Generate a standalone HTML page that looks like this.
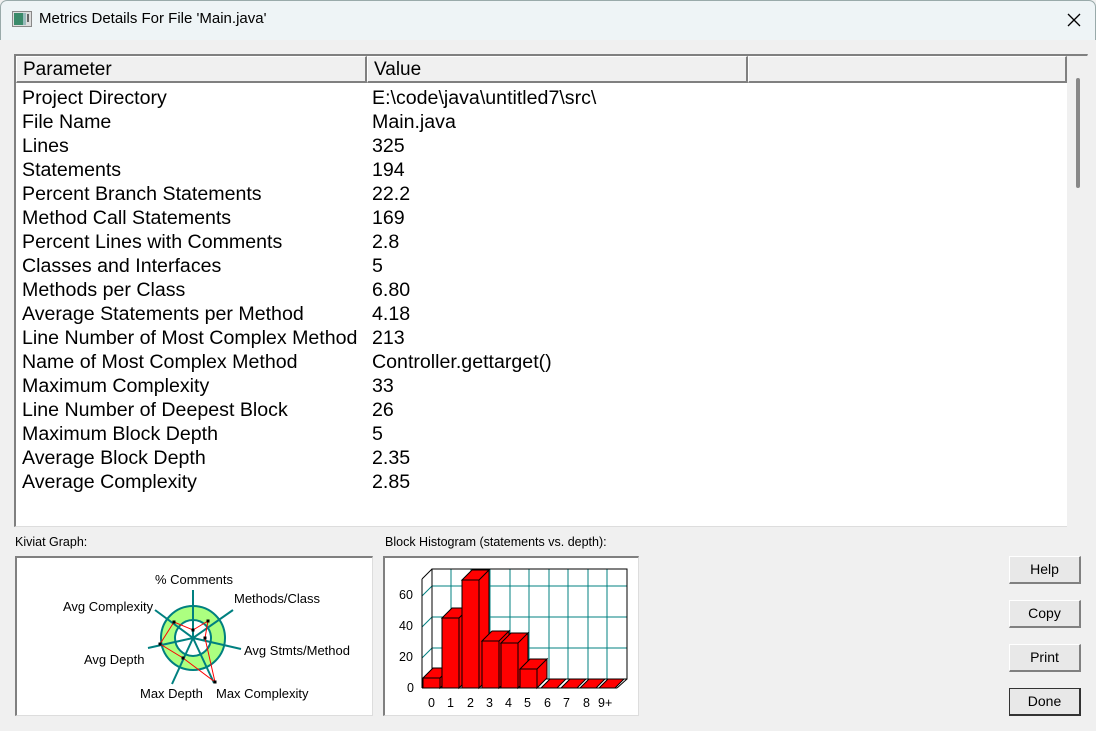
<!DOCTYPE html>
<html><head><style>
*{margin:0;padding:0;box-sizing:border-box}
body{width:1096px;height:731px;background:#f0f0f0;font-family:"Liberation Sans",Arial,sans-serif;position:relative;overflow:hidden}
.a{position:absolute}
.title{left:0;top:0;width:1096px;height:40px;background:#eef4f6;border:1px solid #9aa;border-bottom:none;border-radius:7px 7px 0 0}
.tt{left:39px;top:10px;font-size:15px;color:#000}
.list{left:14px;top:54px;width:1074px;height:473px;background:#fff;border-top:2px solid #808080;border-left:2px solid #808080;border-right:1px solid #ddd;border-bottom:1px solid #ddd}
.hdr{top:0;height:27px;background:#f0f0f0;border-top:1px solid #fff;border-left:1px solid #fff;border-bottom:2px solid #808080;border-right:2px solid #808080;font-size:19px;padding-left:6px;line-height:26px}
.rows{font-size:19.6px;line-height:24px}
.sb{left:1051px;top:0;width:21px;height:471px;background:#f0f0f0}
.btn{width:72px;height:28px;background:#e8e8e8;border-top:1px solid #fff;border-left:1px solid #fff;border-right:2px solid #808080;border-bottom:2px solid #808080;font-size:14px;text-align:center;line-height:25px}
.lbl{font-size:12.5px}
.box{background:#fff;border-top:2px solid #808080;border-left:2px solid #808080;border-right:1px solid #ddd;border-bottom:1px solid #ddd}
</style></head><body>
<div class="a title"></div>
<svg class="a" style="left:12px;top:11px" width="20" height="16"><rect x="0.5" y="0.5" width="19" height="15" fill="#ddd" stroke="#888"/><rect x="2" y="2" width="9" height="12" fill="#3a8a6a"/><rect x="11" y="2" width="3" height="12" fill="#9bb"/><rect x="15" y="3" width="2" height="8" fill="#666"/></svg>
<div class="a tt">Metrics Details For File 'Main.java'</div>
<svg class="a" style="left:1067px;top:13px" width="14" height="14"><path d="M1 1L13 13M13 1L1 13" stroke="#000" stroke-width="1.3"/></svg>

<div class="a list">
 <div class="a hdr" style="left:0;width:351px">Parameter</div>
 <div class="a hdr" style="left:351px;width:381px">Value</div>
 <div class="a hdr" style="left:732px;width:319px"></div>
 <div class="a sb"><div class="a" style="left:9px;top:22px;width:4px;height:110px;background:#888;border-radius:2px"></div></div>
 <div class="a rows" style="left:6px;top:30px">Project Directory<br>File Name<br>Lines<br>Statements<br>Percent Branch Statements<br>Method Call Statements<br>Percent Lines with Comments<br>Classes and Interfaces<br>Methods per Class<br>Average Statements per Method<br>Line Number of Most Complex Method<br>Name of Most Complex Method<br>Maximum Complexity<br>Line Number of Deepest Block<br>Maximum Block Depth<br>Average Block Depth<br>Average Complexity</div>
 <div class="a rows" style="left:356px;top:30px">E:\code\java\untitled7\src\<br>Main.java<br>325<br>194<br>22.2<br>169<br>2.8<br>5<br>6.80<br>4.18<br>213<br>Controller.gettarget()<br>33<br>26<br>5<br>2.35<br>2.85</div>
</div>

<div class="a lbl" style="left:15px;top:535px">Kiviat Graph:</div>
<div class="a lbl" style="left:385px;top:535px">Block Histogram (statements vs. depth):</div>

<div class="a box" style="left:15px;top:556px;width:358px;height:160px"></div>
<svg class="a" style="left:15px;top:556px" width="358" height="160" font-family="Liberation Sans,Arial,sans-serif" font-size="13">
 <g transform="translate(178,82)">
  <circle r="25" fill="none" stroke="#acff80" stroke-width="14"/>
  <circle r="32" fill="none" stroke="#008080" stroke-width="2"/>
  <circle r="18" fill="none" stroke="#008080" stroke-width="2"/>
  <g stroke="#008080" stroke-width="2">
   <line x1="0" y1="0" x2="0" y2="-48"/>
   <line x1="0" y1="0" x2="40" y2="-28"/>
   <line x1="0" y1="0" x2="48" y2="11"/>
   <line x1="0" y1="0" x2="21" y2="45"/>
   <line x1="0" y1="0" x2="-21" y2="46"/>
   <line x1="0" y1="0" x2="-45" y2="10"/>
   <line x1="0" y1="0" x2="-38" y2="-28"/>
  </g>
  <polygon points="0,-8 15,-17 12,0 22,44 -10,20 -33,6 -19,-16" fill="none" stroke="#f00" stroke-width="1"/>
  <g fill="#000"><rect x="-1.5" y="-9.5" width="3" height="3"/><rect x="13.5" y="-18.5" width="3" height="3"/><rect x="10.5" y="-1.5" width="3" height="3"/><rect x="20.5" y="42.5" width="3" height="3"/><rect x="-11.5" y="18.5" width="3" height="3"/><rect x="-34.5" y="4.5" width="3" height="3"/><rect x="-20.5" y="-17.5" width="3" height="3"/></g>
 </g>
 <text x="140" y="28">% Comments</text>
 <text x="219" y="47">Methods/Class</text>
 <text x="48" y="55">Avg Complexity</text>
 <text x="229" y="99">Avg Stmts/Method</text>
 <text x="69" y="108">Avg Depth</text>
 <text x="125" y="142">Max Depth</text>
 <text x="201" y="142">Max Complexity</text>
</svg>

<div class="a box" style="left:383px;top:556px;width:256px;height:160px"></div>
<svg class="a" style="left:383px;top:556px" width="256" height="160" font-family="Liberation Sans,Arial,sans-serif" font-size="13">
 <g stroke="#008080" stroke-width="1" fill="none">
  <line x1="49" y1="13" x2="49" y2="123"/><line x1="68" y1="13" x2="68" y2="123"/><line x1="88" y1="13" x2="88" y2="123"/><line x1="107" y1="13" x2="107" y2="123"/><line x1="127" y1="13" x2="127" y2="123"/><line x1="146" y1="13" x2="146" y2="123"/><line x1="166" y1="13" x2="166" y2="123"/><line x1="185" y1="13" x2="185" y2="123"/><line x1="205" y1="13" x2="205" y2="123"/><line x1="224" y1="13" x2="224" y2="123"/>
  <line x1="49" y1="92" x2="244" y2="92"/><line x1="49" y1="61" x2="244" y2="61"/><line x1="49" y1="30" x2="244" y2="30"/>
  <line x1="39" y1="102" x2="49" y2="92"/><line x1="39" y1="71" x2="49" y2="61"/><line x1="39" y1="40" x2="49" y2="30"/>
 </g>
 <g stroke="#000" stroke-width="1" fill="none">
  <rect x="49" y="13" width="195" height="110"/>
  <line x1="39" y1="23" x2="39" y2="132"/><line x1="39" y1="23" x2="49" y2="13"/>
  <line x1="39" y1="132" x2="234" y2="132"/><line x1="234" y1="132" x2="244" y2="123"/>
 </g>
 <g fill="#000" font-size="12.5"><text x="16" y="43">60</text><text x="16" y="74">40</text><text x="16" y="105">20</text><text x="24" y="136">0</text></g>
 <g fill="#f00" stroke="#000" stroke-width="1">
  <path d="M40 132V122H57V132ZM40 122L50 112H67L57 122ZM57 122L67 112V122L57 132Z"/>
  <path d="M59 132V62H76V132ZM59 62L69 52H86L76 62ZM76 62L86 52V122L76 132Z"/>
  <path d="M79 132V24H96V132ZM79 24L89 14H106L96 24ZM96 24L106 14V122L96 132Z"/>
  <path d="M99 132V85H116V132ZM99 85L109 75H126L116 85ZM116 85L126 75V122L116 132Z"/>
  <path d="M118 132V87H135V132ZM118 87L128 77H145L135 87ZM135 87L145 77V122L135 132Z"/>
  <path d="M137 132V113H154V132ZM137 113L147 103H164L154 113ZM154 113L164 103V122L154 132Z"/>
  <path d="M158 132L167 123H183L174 132Z"/><path d="M178 132L187 123H203L194 132Z"/><path d="M197 132L206 123H222L213 132Z"/><path d="M216 132L225 123H241L232 132Z"/>
 </g>
 <g fill="#000" font-size="12.5"><text x="45" y="151">0</text><text x="64" y="151">1</text><text x="84" y="151">2</text><text x="103" y="151">3</text><text x="122" y="151">4</text><text x="141" y="151">5</text><text x="161" y="151">6</text><text x="180" y="151">7</text><text x="200" y="151">8</text><text x="215" y="151">9+</text></g>
</svg>

<div class="a btn" style="left:1009px;top:556px">Help</div>
<div class="a btn" style="left:1009px;top:600px">Copy</div>
<div class="a btn" style="left:1009px;top:644px">Print</div>
<div class="a btn" style="left:1009px;top:688px;border:1px solid #333;border-right:2px solid #333;border-bottom:2px solid #333">Done</div>
</body></html>
